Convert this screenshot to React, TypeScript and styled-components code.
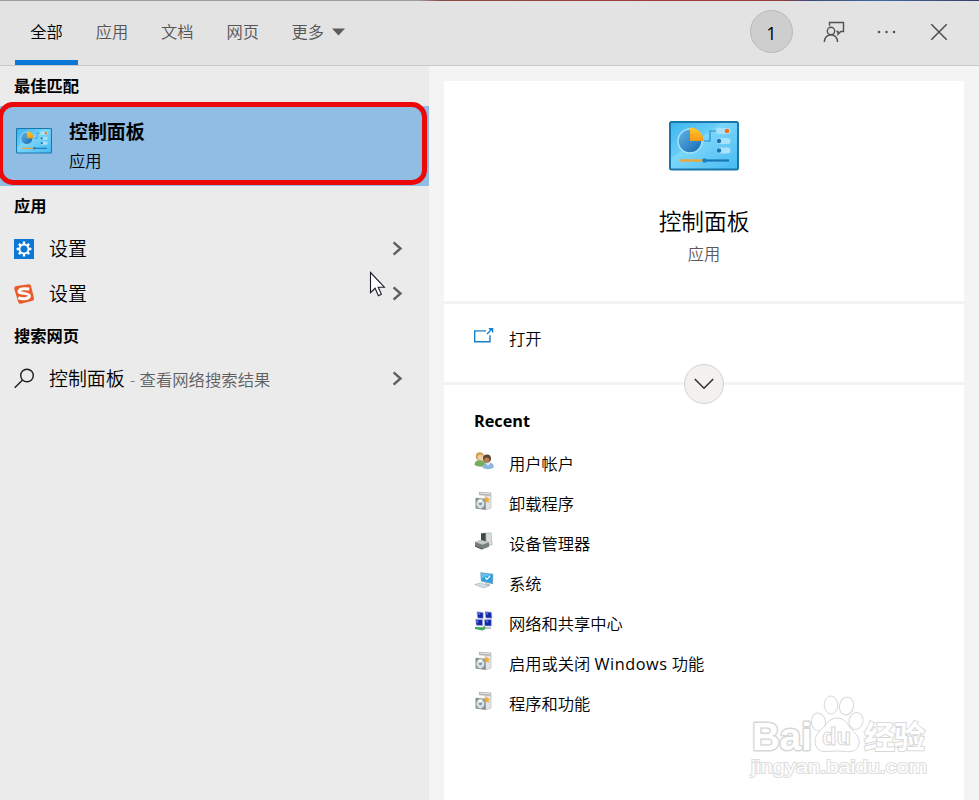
import React from "react";
import styled, { createGlobalStyle, css } from "styled-components";

const GlobalStyle = createGlobalStyle`
  *, *::before, *::after { box-sizing: border-box; }
  html, body { margin: 0; padding: 0; }
  body {
    width: 979px;
    height: 800px;
    overflow: hidden;
    font-family: "Open Sans", "Noto Sans CJK SC", sans-serif;
    font-size: 16.25px;
    font-weight: 350;
    color: #000;
  }
  svg { display: block; flex: none; }
`;

const Window = styled.div`
  position: relative;
  display: flex;
  flex-direction: column;
  width: 979px;
  height: 800px;
  overflow: hidden;
  background: #f4f4f4;
`;

const DesktopStrip = styled.div`
  height: 1px;
  flex: none;
  background: linear-gradient(90deg, #9c9c9e 0 420px, #8a4a44 440px, #a33a3a 700px, #93403f 780px, #3c4a7c 810px, #3f6a9c 880px, #3b3a70 979px);
`;

const Header = styled.header`
  display: flex;
  justify-content: space-between;
  height: 65px;
  flex: none;
  background: #e3e3e3;
  border-bottom: 1px solid #c9c9c9;
`;

const Tabs = styled.nav`
  display: flex;
  gap: 2.4px;
  padding-left: 15px;
`;

const Tab = styled.div<{ $active?: boolean }>`
  display: flex;
  align-items: center;
  justify-content: center;
  gap: 8px;
  min-width: 63px;
  height: 64px;
  padding: 7px 15px 5px 15px;
  line-height: 22px;
  white-space: nowrap;
  color: ${(p) => (p.$active ? "#000" : "#555")};
  border-bottom: 5px solid ${(p) => (p.$active ? "#0a78d4" : "transparent")};
`;

const HeaderActions = styled.div`
  display: flex;
  align-items: center;
  width: 229px;
  height: 61px;
`;

const Points = styled.div`
  display: flex;
  align-items: center;
  justify-content: center;
  width: 43px;
  height: 43px;
  margin-right: 30px;
  border: 1px solid #b9b9b9;
  border-radius: 50%;
  background: #cecece;
  font-size: 18px;
  font-weight: 400;
  padding-top: 2px;
`;

const MoreDots = styled.svg`
  margin-left: 31px;
`;

const CloseIcon = styled.svg`
  margin-left: 34px;
`;

const Body = styled.div`
  display: flex;
  flex: 1;
  min-height: 0;
`;

const Results = styled.main`
  width: 429px;
  background: #ebebeb;
`;

const SectionTitle = styled.h2`
  display: flex;
  align-items: center;
  height: 40px;
  margin: 0;
  padding: 0 0 2px 14px;
  font-size: 16.25px;
  font-weight: 700;
`;

const BestMatch = styled.div`
  position: relative;
  display: flex;
  align-items: center;
  gap: 17px;
  height: 80px;
  padding: 0 0 10px 16px;
  background: #8fbde4;
`;

const HighlightFrame = styled.div`
  position: absolute;
  left: -2px;
  top: -4px;
  width: 429px;
  height: 83px;
  border: 5px solid #ec0909;
  border-radius: 15px;
`;

const BestText = styled.div`
  display: flex;
  flex-direction: column;
  gap: 5px;
  padding-top: 10px;
`;

const BestName = styled.div`
  font-size: 18.9px;
  line-height: 25px;
  font-weight: 700;
`;

const Kind = styled.div<{ $muted?: boolean }>`
  line-height: 22px;
  color: ${(p) => (p.$muted ? "#5a5a5a" : "#000")};
`;

const ResultRow = styled.div`
  display: flex;
  align-items: center;
  height: 45px;
  padding: 0 26px 0 14px;
  > svg:last-child { margin-left: auto; }
`;

const ResultName = styled.span`
  margin-left: 15px;
  font-size: 18.9px;
  line-height: 26px;
`;

const ResultHint = styled.span`
  margin: 0 0 0 5.5px;
  font-size: 16.35px;
  color: #5f5f5f;
`;

const Preview = styled.aside`
  width: 520px;
  margin: 15px 15px 0;
  background: #fff;
`;

const sectionLine = css`border-bottom: 3px solid #f3f3f3;`;

const Hero = styled.div`
  display: flex;
  flex-direction: column;
  align-items: center;
  height: 223px;
  padding-top: 40px;
  ${sectionLine}
`;

const HeroName = styled.div`
  margin-top: 35px;
  font-size: 22.7px;
  line-height: 32px;
`;

const HeroKind = styled(Kind)`
  margin-top: 5px;
`;

const ActionSection = styled.div`
  position: relative;
  height: 81px;
  padding-top: 14px;
  ${sectionLine}
`;

const ExpandButton = styled.button`
  position: absolute;
  left: 240px;
  bottom: -22px;
  display: flex;
  align-items: center;
  justify-content: center;
  width: 40px;
  height: 40px;
  padding: 0;
  border: 1px solid #d2d2d2;
  border-radius: 50%;
  background: #f2f1f0;
`;

const LinkRow = styled.div`
  display: flex;
  align-items: center;
  gap: 15px;
  height: 40px;
  padding-left: 30px;
  > svg { margin-bottom: 5px; }
`;

const Latin = styled.span`
  font-weight: 400;
  letter-spacing: 0.55px;
`;

const RecentTitle = styled.h3`
  margin: 0;
  padding: 24px 0 0 30px;
  height: 58px;
  font-size: 16.25px;
  line-height: 24px;
  font-weight: 700;
`;

const Cursor = styled.svg`
  position: absolute;
  left: 369px;
  top: 271px;
`;

const Watermark = styled.svg`
  position: absolute;
  left: 740px;
  top: 685px;
`;

const PanelIcon = ({ size, id }: { size: number; id: string }) => (
  <svg width={size} height={(size * 50) / 70} viewBox="0 0 70 50">
    <defs>
      <linearGradient id={id + "bg"} x1="0" y1="0" x2="1" y2="1">
        <stop offset="0" stopColor="#38b4ee" />
        <stop offset=".38" stopColor="#67cdf8" />
        <stop offset=".4" stopColor="#7cd7fb" />
        <stop offset="1" stopColor="#47b9f0" />
      </linearGradient>
      <linearGradient id={id + "pie"} x1="0" y1="0" x2="1" y2="1">
        <stop offset="0" stopColor="#62b6e6" />
        <stop offset="1" stopColor="#1268b4" />
      </linearGradient>
      <linearGradient id={id + "gold"} x1="0" y1="0" x2="0" y2="1">
        <stop offset="0" stopColor="#ffc928" />
        <stop offset="1" stopColor="#f49a16" />
      </linearGradient>
    </defs>
    <rect x="1" y="1" width="68" height="47.5" rx="1.5" fill={`url(#${id}bg)`} stroke="#1b77ab" strokeWidth="2" />
    <circle cx="21" cy="20" r="12" fill={`url(#${id}pie)`} stroke="#a5e3fc" strokeWidth="1.5" />
    <path d="M21 20V6.5a13.5 13.5 0 0 1 13.5 13.5Z" fill={`url(#${id}gold)`} />
    <path d="M35 20h6V10h7" fill="none" stroke="#278bc4" strokeWidth="1.2" />
    <g fill="#a9e2fa">
      <rect x="47" y="7" width="14.5" height="6" rx="3" />
      <rect x="47.5" y="17" width="14" height="6" rx="3" />
      <rect x="47.5" y="26.5" width="14" height="6" rx="3" />
    </g>
    <circle cx="58" cy="10" r="2.3" fill="#f0741c" />
    <circle cx="50" cy="20" r="2.2" fill="#1873b8" />
    <circle cx="50" cy="29.5" r="2.2" fill="#1873b8" />
    <path d="M11 39.5h23" stroke="#eba83a" strokeWidth="2.4" />
    <path d="M35 39.5h25" stroke="#1976b5" strokeWidth="2.2" />
    <circle cx="35.5" cy="39.5" r="2.3" fill="#1683c8" />
  </svg>
);

const ChevronRight = () => (
  <svg width="12" height="16" viewBox="0 0 12 16">
    <path d="M2.6 1.3 9.5 7.5l-6.9 6.2" fill="none" stroke="#5f5f5f" strokeWidth="2.4" />
  </svg>
);

const GearIcon = () => (
  <svg width="20" height="20" viewBox="0 0 20 20">
    <path fill="#0c78d5" d="M0 0h20v20H0z" />
    <g stroke="#fff" strokeWidth="2.4">
      <path d="M10 2.6v2.6M10 14.8v2.6M2.6 10h2.6M14.8 10h2.6M4.8 4.8l1.8 1.8M13.4 13.4l1.8 1.8M4.8 15.2l1.8-1.8M13.4 6.6l1.8-1.8" />
    </g>
    <circle cx="10" cy="10" r="4.5" fill="#0c78d5" stroke="#fff" strokeWidth="1.9" />
  </svg>
);

const SogouIcon = () => (
  <svg width="20" height="20" viewBox="0 0 20 20">
    <path d="M2.5 2.1 14.7.3q2-.2 2.4 1.6L20 14.2q.4 2-1.6 2.6L7 19.7q-2 .4-2.7-1.5L.3 5Q-.2 2.8 2.5 2.1Z" fill="#e95b2b" />
    <path d="M15.3 5.1Q6 3.7 5 7.1c-.7 3 10.6 1.5 10.4 4.8-.1 3.2-7.5 3.5-11 1.8" fill="none" stroke="#fff" strokeWidth="3" />
  </svg>
);

const SearchIcon = () => (
  <svg width="20" height="21" viewBox="0 0 20 21" fill="none" stroke="#1c1c1c" strokeWidth="1.4">
    <circle cx="13" cy="7.5" r="6.3" />
    <path d="M8.3 12.2.7 19.8" />
  </svg>
);

const FeedbackIcon = () => (
  <svg width="22" height="22" viewBox="0 0 22 22" fill="none" stroke="#505050" strokeWidth="1.4">
    <path d="M6.5 4.7V1.5h14v9h-2.7L15 13.3v-2.8h-1.6" />
    <circle cx="8" cy="10" r="3.7" />
    <path d="M1.3 21c0-4.4 3-7.3 6.7-7.3s6.6 2.9 6.6 7.3" />
  </svg>
);

const OpenIcon = () => (
  <svg width="20" height="16" viewBox="0 0 20 16" fill="none" stroke="#177fca" strokeWidth="1.4">
    <path d="M12 2.9H.7v10.8H16V7.3" />
    <path d="m13 5.9 5-5M14.8.7h3.8v3.8" />
    <path d="M16 .5h3v3z" fill="#177fca" stroke="none" />
  </svg>
);

const UsersIcon = () => (
  <svg width="20" height="20" viewBox="0 0 20 20">
    <path d="M.5 14q0-5 5.7-5t5.4 6Q5 17 .5 14Z" fill="#78ad60" />
    <circle cx="5.8" cy="5.2" r="4" fill="#d2a14d" />
    <circle cx="6.5" cy="6.5" r="2.8" fill="#f0cba4" />
    <path d="M8.5 17q.5-5.5 6-5.5t5.3 5q-5 3-11.3.5Z" fill="#8db5e3" />
    <path d="m11 11 3 4 3-4" fill="#e8edf0" />
    <circle cx="13" cy="7.4" r="4" fill="#594737" />
    <circle cx="12.8" cy="9.2" r="2.7" fill="#b87e50" />
  </svg>
);

const ProgramsIcon = () => (
  <svg width="20" height="20" viewBox="0 0 20 20">
    <path d="m5 .8 12.2.8v3.6L5 4.2z" fill="#b4b8b6" />
    <path d="m6 1.6 10 .7v1l-10-.7z" fill="#e6e7e4" />
    <path d="m11 4.6 6-.1v12.7l-5.3 1.4z" fill="#e3e5e4" stroke="#b4b7b4" strokeWidth=".6" />
    <path d="m1.5 6.8 10.2 1V19L1.5 17.6z" fill="#858d8d" />
    <ellipse cx="6.4" cy="12.8" rx="4.1" ry="4.7" fill="#d3dfe4" />
    <path d="M6.4 12.8 4.2 9.2l3.6-.6z" fill="#fff" />
    <circle cx="6.4" cy="12.8" r="1.4" fill="#758e99" />
    <path d="m12.8 5.4 1 2.2 2.5.3-1.9 1.6.6 2.4-2.2-1.2-2.1 1 .5-2.3-1.9-1.7 2.4-.3z" fill="#f0aa35" />
  </svg>
);

const DeviceIcon = () => (
  <svg width="20" height="20" viewBox="0 0 20 20">
    <path d="m7 2 10.5-.6 1 12.6-9 2z" fill="#b4b8b8" />
    <path d="m7 2.5 4.6-.4V11L7 10.6z" fill="#3c4c47" />
    <path d="m12.4 2.5 4.6-.3.6 11-5 .5z" fill="#d9dcdb" />
    <path d="m1 11 6-2 8 2.3v4.4l-7 2.9-7-3.1z" fill="#777d7e" />
    <path d="m1 11 6-2 8 2.3-6.5 2.5z" fill="#c4c8c8" />
    <path d="m1 14.8 7 2.7v1.1l-7-3z" fill="#464c4d" />
  </svg>
);

const SystemIcon = () => (
  <svg width="20" height="20" viewBox="0 0 20 20">
    <path d="m6.3 1.2 13 1.6-.3 10.4-12.1-2.6z" fill="#6fa3c6" />
    <path d="m7.3 2.3 11 1.4-.4 8-10.2-2.1z" fill="#2a9fe2" />
    <path d="m7.3 2.3 11 1.4-8 2.1-2.7 2z" fill="#69c0ef" />
    <path d="m11.3 6.5 1.6 1.8L16 5" fill="none" stroke="#fff" strokeWidth="1.2" />
    <path d="m11 12 5 1v2l-4.5.6z" fill="#b2c8d7" />
    <path d="m.8 13.6 5.5-1.7 8.7 2.9-5.2 2.2z" fill="#d4dde3" stroke="#9cadbc" strokeWidth=".6" />
  </svg>
);

const NetworkIcon = () => (
  <svg width="20" height="20" viewBox="0 0 20 20">
    <g stroke="#a9b9d8" strokeWidth=".7" fill="#1527ae">
      <path d="m3 .7 6.2.8v6L3.5 7zM11 .7l6.5.5.5 6-6.3-.2zM1.7 8.2l7 .5v6l-6.5-.5zM10.4 8.5h7V15h-6.7z" />
    </g>
    <path d="m4 1.5 2 2M12 1.5l2 2M2.5 9.5l2 2M12 9.3l2 2" stroke="#5b77df" strokeWidth="1.6" />
    <path d="M4 17h13M10 15v4" stroke="#c0c8c6" strokeWidth="2" />
    <path d="m1 16 8 .5 1.5-1.5 1 2.5-3 2-7.5-1.5z" fill="#3faa58" />
  </svg>
);

const results = [GearIcon, SogouIcon];

const recents: { icon: React.FC; id: string; label: React.ReactNode }[] = [
  { icon: UsersIcon, id: "users", label: "用户帐户" },
  { icon: ProgramsIcon, id: "uninstall", label: "卸载程序" },
  { icon: DeviceIcon, id: "devices", label: "设备管理器" },
  { icon: SystemIcon, id: "system", label: "系统" },
  { icon: NetworkIcon, id: "network", label: "网络和共享中心" },
  { icon: ProgramsIcon, id: "features", label: <>启用或关闭 <Latin>Windows</Latin> 功能</> },
  { icon: ProgramsIcon, id: "programs", label: "程序和功能" },
];

export default function App() {
  return (
    <Window>
      <GlobalStyle />
      <DesktopStrip />
      <Header>
        <Tabs>
          <Tab $active>全部</Tab>
          <Tab>应用</Tab>
          <Tab>文档</Tab>
          <Tab>网页</Tab>
          <Tab>
            更多
            <svg width="13" height="8" viewBox="0 0 13 8"><path d="M0 .5h13L6.5 7.5z" fill="#5c5c5c" /></svg>
          </Tab>
        </Tabs>
        <HeaderActions>
          <Points>1</Points>
          <FeedbackIcon />
          <MoreDots width="20" height="4" viewBox="0 0 20 4" fill="#555">
            <circle cx="3" cy="2" r="1.3" /><circle cx="10.5" cy="2" r="1.3" /><circle cx="18" cy="2" r="1.3" />
          </MoreDots>
          <CloseIcon width="18" height="18" viewBox="0 0 18 18">
            <path d="m1.3 1.3 15.4 15.4M16.7 1.3 1.3 16.7" stroke="#4d4d4d" strokeWidth="1.5" />
          </CloseIcon>
        </HeaderActions>
      </Header>
      <Body>
        <Results>
          <SectionTitle>最佳匹配</SectionTitle>
          <BestMatch>
            <PanelIcon size={36} id="small" />
            <BestText>
              <BestName>控制面板</BestName>
              <Kind>应用</Kind>
            </BestText>
            <HighlightFrame />
          </BestMatch>
          <SectionTitle>应用</SectionTitle>
          {results.map((Icon, i) => (
            <ResultRow key={i}>
              <Icon />
              <ResultName>设置</ResultName>
              <ChevronRight />
            </ResultRow>
          ))}
          <SectionTitle>搜索网页</SectionTitle>
          <ResultRow>
            <SearchIcon />
            <ResultName>控制面板</ResultName>
            <ResultHint>- 查看网络搜索结果</ResultHint>
            <ChevronRight />
          </ResultRow>
        </Results>
        <Preview>
          <Hero>
            <PanelIcon size={70} id="large" />
            <HeroName>控制面板</HeroName>
            <HeroKind $muted>应用</HeroKind>
          </Hero>
          <ActionSection>
            <LinkRow><OpenIcon />打开</LinkRow>
            <ExpandButton aria-label="展开">
              <svg width="20" height="12" viewBox="0 0 20 12"><path d="m.8 1 9.2 9.2L19.2 1" fill="none" stroke="#333" strokeWidth="1.6" /></svg>
            </ExpandButton>
          </ActionSection>
          <RecentTitle>Recent</RecentTitle>
          {recents.map(({ icon: Icon, id, label }) => (
            <LinkRow key={id}>
              <Icon />
              <span>{label}</span>
            </LinkRow>
          ))}
        </Preview>
      </Body>
      <Cursor width="18" height="28" viewBox="0 0 18 28">
        <path d="M1.5 1.5v20.2l4.6-4.4 3.3 7.4 3-1.4-3.2-7.1h6.2z" fill="#fff" stroke="#1c1c28" strokeWidth="1.1" />
      </Cursor>
      <Watermark width="200" height="100" viewBox="0 0 200 100" fill="#fff" stroke="#d8d8d8" strokeWidth="1">
        <text x="12" y="65" fontFamily="Liberation Sans" fontWeight="700" fontSize="38" strokeWidth="3" strokeLinejoin="round" paintOrder="stroke" textLength="60" lengthAdjust="spacingAndGlyphs">Bai</text>
        <ellipse cx="78.5" cy="37" rx="7" ry="9" transform="rotate(-8 78.5 37)" />
        <ellipse cx="91" cy="20" rx="6.8" ry="9" />
        <ellipse cx="106.5" cy="21" rx="7" ry="9" transform="rotate(12 106.5 21)" />
        <ellipse cx="116" cy="36" rx="7" ry="8.5" transform="rotate(15 116 36)" />
        <path d="M97 33c-8 0-10 6-15 11-5 4-9 10-6 17 3 8 12 5 21 5s17 3 21-4c4-8-2-13-7-18-4-5-6-11-14-11Z" />
        <text x="82" y="60" fontFamily="Liberation Sans" fontWeight="700" fontSize="23" textLength="29" lengthAdjust="spacingAndGlyphs">du</text>
        <text x="124" y="63" fontFamily="Noto Sans CJK SC" fontWeight="700" fontSize="31" strokeWidth="2" paintOrder="stroke" textLength="61">经验</text>
        <text x="11" y="88" fontFamily="Liberation Sans" fontWeight="400" fontSize="19" textLength="176" lengthAdjust="spacingAndGlyphs" strokeWidth="2" paintOrder="stroke" stroke="#dedede">jingyan.baidu.com</text>
      </Watermark>
    </Window>
  );
}
